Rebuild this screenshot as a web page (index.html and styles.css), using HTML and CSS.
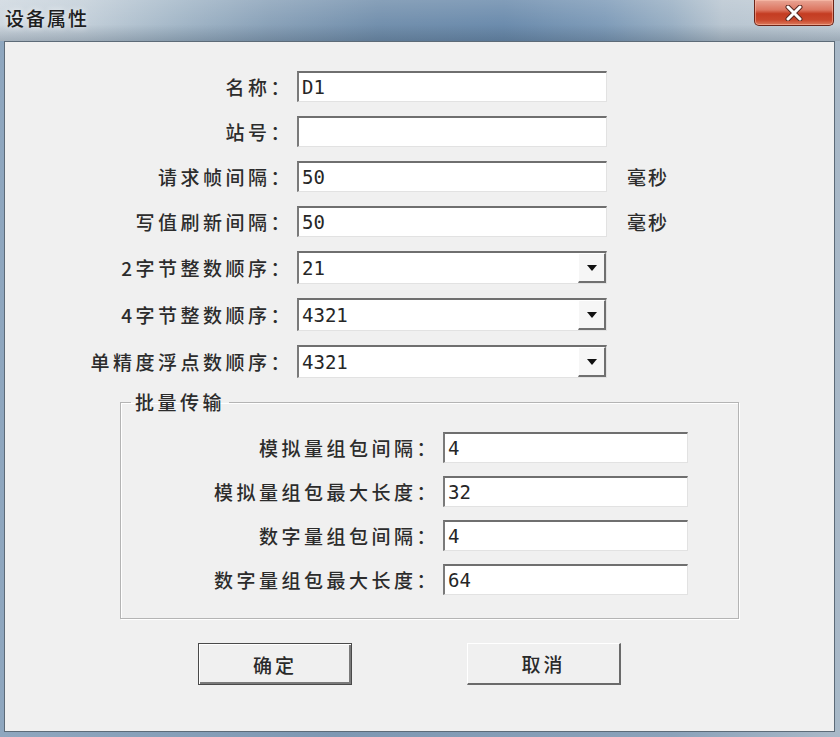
FILE: index.html
```html
<!DOCTYPE html>
<html lang="zh-CN">
<head>
  <meta charset="UTF-8" />
  <title>设备属性</title>
  <link rel="stylesheet" href="styles.css">
</head>
<body>

  <div class="window">
    <div class="titlebar">
      <div class="title">设备属性</div>
      <div class="close-btn">
        <svg width="20" height="16" viewBox="0 0 20 16">
          <path d="M4 2 L16 14 M16 2 L4 14" stroke="#5a2a22" stroke-width="5" stroke-linecap="round" fill="none"/>
          <path d="M4 2 L16 14 M16 2 L4 14" stroke="#ffffff" stroke-width="3" stroke-linecap="round" fill="none"/>
        </svg>
      </div>
    </div>

    <div class="client">
      <div class="form">
        <label class="lbl">名称：</label>
        <div class="field"><span class="val">D1</span></div>
        <span></span>

        <label class="lbl">站号：</label>
        <div class="field"></div>
        <span></span>

        <label class="lbl">请求帧间隔：</label>
        <div class="field"><span class="val">50</span></div>
        <span class="unit">毫秒</span>

        <label class="lbl">写值刷新间隔：</label>
        <div class="field"><span class="val">50</span></div>
        <span class="unit">毫秒</span>

        <label class="lbl">2字节整数顺序：</label>
        <div class="field combo"><span class="val">21</span><span class="drop"><i class="arrow"></i></span></div>
        <span></span>

        <label class="lbl">4字节整数顺序：</label>
        <div class="field combo"><span class="val">4321</span><span class="drop"><i class="arrow"></i></span></div>
        <span></span>

        <label class="lbl">单精度浮点数顺序：</label>
        <div class="field combo"><span class="val">4321</span><span class="drop"><i class="arrow"></i></span></div>
        <span></span>
      </div>

      <fieldset class="group">
        <legend>批量传输</legend>
        <div class="group-form">
          <label class="lbl">模拟量组包间隔：</label>
          <div class="field"><span class="val">4</span></div>

          <label class="lbl">模拟量组包最大长度：</label>
          <div class="field"><span class="val">32</span></div>

          <label class="lbl">数字量组包间隔：</label>
          <div class="field"><span class="val">4</span></div>

          <label class="lbl">数字量组包最大长度：</label>
          <div class="field"><span class="val">64</span></div>
        </div>
      </fieldset>

      <div class="buttons">
        <div class="btn default">确定</div>
        <div class="btn">取消</div>
      </div>
    </div>
  </div>

</body>
</html>
```

FILE: styles.css
```css
body {
  margin: 0;
  width: 840px;
  height: 737px;
  overflow: hidden;
  font-family: "Noto Sans CJK SC", "Noto Sans", sans-serif;
  color: #2a2a2a;
}

.window {
  width: 840px;
  height: 737px;
  display: flex;
  flex-direction: column;
  background: linear-gradient(
    to right,
    #8fa7bf 0%,
    #7e98b3 40%,
    #8ba2ba 80%,
    #a9b9c8 100%
  );
}

/* ---------- TITLE BAR ---------- */
.titlebar {
  height: 41px;
  display: flex;
  align-items: flex-start;
  background:
    linear-gradient(to bottom, rgba(255,255,255,0.15) 0%, rgba(255,255,255,0) 60%, rgba(40,60,80,0.25) 100%),
    linear-gradient(
      to right,
      #cfd8e0 0%,
      #c3cfd9 10%,
      #a2b6c7 22%,
      #8aa2b9 32%,
      #7390ad 45%,
      #6c8cad 60%,
      #7f9cb9 72%,
      #9ab0c4 80%,
      #b9c6d1 86%,
      #c2ced8 100%
    );
}

.title {
  padding: 4px 0 0 5px;
  font-size: 19px;
  font-weight: 500;
  letter-spacing: 2px;
  color: #1e1e1e;
  text-shadow: 0 0 6px rgba(255,255,255,0.8);
}

.close-btn {
  margin-left: auto;
  margin-right: 6px;
  width: 78px;
  height: 25px;
  border: 1px solid #6b2418;
  border-top: none;
  border-radius: 0 0 5px 5px;
  background: linear-gradient(
    to bottom,
    #e9a595 0%,
    #dc7560 40%,
    #c43c22 55%,
    #c9472c 80%,
    #dc7a5c 100%
  );
  display: flex;
  align-items: center;
  justify-content: center;
  box-shadow: inset 0 0 0 1px rgba(255,200,180,0.5);
}

/* ---------- CLIENT ---------- */
.client {
  flex: 1;
  margin: 0 5px 5px 4px;
  border: 1px solid #5d6b78;
  background: #f0f0f0;
  display: flex;
  flex-direction: column;
}

.form {
  display: grid;
  grid-template-columns: 288px 310px auto;
  column-gap: 4px;
  row-gap: 14px;
  margin-top: 29px;
  align-items: center;
}

.lbl {
  text-align: right;
  font-size: 19px;
  font-weight: 500;
  letter-spacing: 3.5px;
  white-space: nowrap;
  color: #2c2c2c;
}

.unit {
  margin-left: 16px;
  font-size: 19px;
  font-weight: 500;
  letter-spacing: 2px;
  color: #2c2c2c;
}

.field {
  height: 31px;
  box-sizing: border-box;
  background: #ffffff;
  border-style: solid;
  border-width: 2px 1px 1px 2px;
  border-color: #6f6f6f #e2e2e2 #e2e2e2 #7a7a7a;
  display: flex;
  align-items: center;
}

.field.combo {
  height: 33px;
}

.val {
  flex: 1;
  padding-left: 3px;
  font-family: "DejaVu Sans Mono", "Liberation Mono", monospace;
  font-size: 19px;
  color: #262626;
}

.drop {
  width: 28px;
  height: 100%;
  box-sizing: border-box;
  background: #f6f6f6;
  border-style: solid;
  border-width: 1px 2px 2px 1px;
  border-color: #ffffff #707070 #707070 #ffffff;
  display: flex;
  align-items: center;
  justify-content: center;
}

.arrow {
  width: 0;
  height: 0;
  border-left: 5px solid transparent;
  border-right: 5px solid transparent;
  border-top: 6px solid #111111;
}

/* ---------- GROUP ---------- */
.group {
  margin: 12px 0 0 115px;
  width: 619px;
  box-sizing: border-box;
  padding: 0 0 23px 0;
  border: 1px solid #b4b4b4;
  box-shadow: inset 1px 1px 0 #ffffff, 1px 1px 0 #ffffff;
  min-width: 0;
}

.group legend {
  margin-left: 10px;
  padding: 0 4px;
  font-size: 19px;
  font-weight: 500;
  letter-spacing: 3.5px;
  line-height: 24px;
  color: #2c2c2c;
}

.group-form {
  display: grid;
  grid-template-columns: 318px 245px;
  column-gap: 4px;
  row-gap: 13px;
  margin-top: 18px;
  align-items: center;
}

/* ---------- BUTTONS ---------- */
.buttons {
  display: flex;
  gap: 115px;
  margin: 24px 0 0 193px;
}

.btn {
  width: 154px;
  height: 42px;
  box-sizing: border-box;
  background: #f0f0f0;
  border-style: solid;
  border-width: 1px 2px 2px 1px;
  border-color: #ffffff #6a6a6a #6a6a6a #ffffff;
  display: flex;
  align-items: center;
  justify-content: center;
  font-size: 19px;
  font-weight: 500;
  letter-spacing: 3px;
  color: #2a2a2a;
}

.btn.default {
  border: 1px solid #4a4a4a;
  box-shadow: inset 1px 1px 0 #ffffff, inset -2px -2px 0 #7a7a7a;
}
```
